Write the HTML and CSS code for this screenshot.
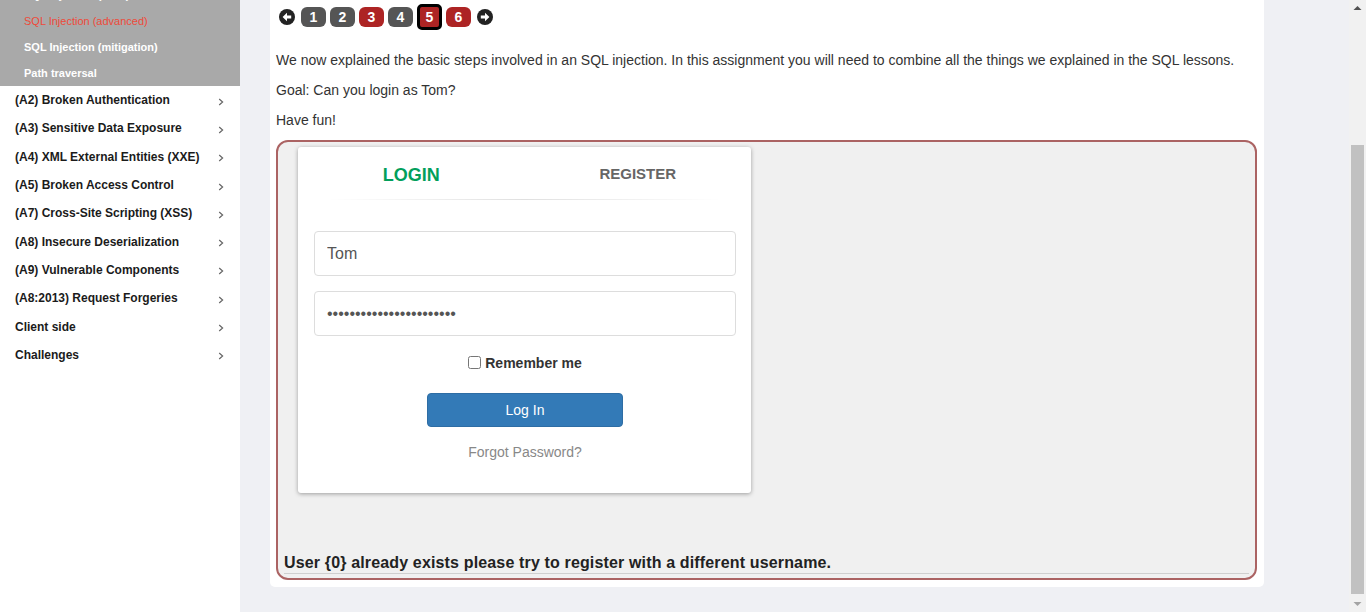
FILE: index.html
```html
<!DOCTYPE html>
<html lang="en">
<head>
<meta charset="utf-8">
<title>WebGoat - SQL Injection (advanced)</title>
<link rel="stylesheet" href="styles.css">
</head>
<body>
<div class="app">
  <aside class="sidebar">
    <ul class="submenu">
      <li class="sub-item">SQL Injection (intro)</li>
      <li class="sub-item active">SQL Injection (advanced)</li>
      <li class="sub-item">SQL Injection (mitigation)</li>
      <li class="sub-item">Path traversal</li>
    </ul>
    <ul class="menu">
      <li class="menu-item"><span>(A2) Broken Authentication</span><svg class="chev" viewBox="0 0 6 8" width="6" height="8"><path d="M1.2 1 L4.6 4 L1.2 7" fill="none" stroke="#666" stroke-width="1.2"/></svg></li>
      <li class="menu-item"><span>(A3) Sensitive Data Exposure</span><svg class="chev" viewBox="0 0 6 8" width="6" height="8"><path d="M1.2 1 L4.6 4 L1.2 7" fill="none" stroke="#666" stroke-width="1.2"/></svg></li>
      <li class="menu-item"><span>(A4) XML External Entities (XXE)</span><svg class="chev" viewBox="0 0 6 8" width="6" height="8"><path d="M1.2 1 L4.6 4 L1.2 7" fill="none" stroke="#666" stroke-width="1.2"/></svg></li>
      <li class="menu-item"><span>(A5) Broken Access Control</span><svg class="chev" viewBox="0 0 6 8" width="6" height="8"><path d="M1.2 1 L4.6 4 L1.2 7" fill="none" stroke="#666" stroke-width="1.2"/></svg></li>
      <li class="menu-item"><span>(A7) Cross-Site Scripting (XSS)</span><svg class="chev" viewBox="0 0 6 8" width="6" height="8"><path d="M1.2 1 L4.6 4 L1.2 7" fill="none" stroke="#666" stroke-width="1.2"/></svg></li>
      <li class="menu-item"><span>(A8) Insecure Deserialization</span><svg class="chev" viewBox="0 0 6 8" width="6" height="8"><path d="M1.2 1 L4.6 4 L1.2 7" fill="none" stroke="#666" stroke-width="1.2"/></svg></li>
      <li class="menu-item"><span>(A9) Vulnerable Components</span><svg class="chev" viewBox="0 0 6 8" width="6" height="8"><path d="M1.2 1 L4.6 4 L1.2 7" fill="none" stroke="#666" stroke-width="1.2"/></svg></li>
      <li class="menu-item"><span>(A8:2013) Request Forgeries</span><svg class="chev" viewBox="0 0 6 8" width="6" height="8"><path d="M1.2 1 L4.6 4 L1.2 7" fill="none" stroke="#666" stroke-width="1.2"/></svg></li>
      <li class="menu-item"><span>Client side</span><svg class="chev" viewBox="0 0 6 8" width="6" height="8"><path d="M1.2 1 L4.6 4 L1.2 7" fill="none" stroke="#666" stroke-width="1.2"/></svg></li>
      <li class="menu-item"><span>Challenges</span><svg class="chev" viewBox="0 0 6 8" width="6" height="8"><path d="M1.2 1 L4.6 4 L1.2 7" fill="none" stroke="#666" stroke-width="1.2"/></svg></li>
    </ul>
  </aside>

  <main class="main">
    <section class="panel">
      <nav class="pager">
        <svg class="pager-arrow prev" viewBox="0 0 16 16" width="16" height="16"><circle cx="8" cy="8" r="8" fill="#222"/><path d="M3.6 8 L8 3.8 L8 6.4 L12.2 6.4 L12.2 9.6 L8 9.6 L8 12.2 Z" fill="#fff"/></svg>
        <span class="page done">1</span>
        <span class="page done">2</span>
        <span class="page todo">3</span>
        <span class="page done">4</span>
        <span class="page todo current">5</span>
        <span class="page todo">6</span>
        <svg class="pager-arrow next" viewBox="0 0 16 16" width="16" height="16"><circle cx="8" cy="8" r="8" fill="#222"/><path d="M12.4 8 L8 3.8 L8 6.4 L3.8 6.4 L3.8 9.6 L8 9.6 L8 12.2 Z" fill="#fff"/></svg>
      </nav>

      <p class="intro first">We now explained the basic steps involved in an SQL injection. In this assignment you will need to combine all the things we explained in the SQL lessons.</p>
      <p class="intro">Goal: Can you login as Tom?</p>
      <p class="intro">Have fun!</p>

      <div class="attack">
        <div class="card">
          <div class="tabs">
            <span class="tab tab-active">LOGIN</span>
            <span class="tab">REGISTER</span>
          </div>
          <div class="tab-rule"></div>
          <form class="login-form">
            <input class="field" type="text" value="Tom">
            <input class="field pass" type="password" value="thisisasecretfortomonly">
            <label class="remember"><input type="checkbox" class="check"> Remember me</label>
            <button type="button" class="btn-login">Log In</button>
            <span class="forgot">Forgot Password?</span>
          </form>
        </div>
        <div class="feedback">User {0} already exists please try to register with a different username.</div>
      </div>
    </section>
  </main>

  <div class="scrollbar">
    <svg class="sb-arrow" viewBox="0 0 17 17" width="17" height="17"><path d="M4.5 10 L8.5 6 L12.5 10 Z" fill="#505050"/></svg>
    <div class="sb-track"><div class="sb-thumb"></div></div>
    <svg class="sb-arrow" viewBox="0 0 17 17" width="17" height="17"><path d="M4.5 7 L8.5 11 L12.5 7 Z" fill="#a3a3a3"/></svg>
  </div>
</div>
</body>
</html>
```

FILE: styles.css
```css
* { box-sizing: border-box; }

html, body {
  margin: 0;
  padding: 0;
  height: 612px;
  overflow: hidden;
}

body {
  font-family: "Liberation Sans", Arial, sans-serif;
  font-size: 14px;
  color: #333;
  background: #eff0f4;
}

.app {
  display: flex;
  height: 612px;
}

/* ---------- sidebar ---------- */
.sidebar {
  width: 240px;
  flex: 0 0 240px;
  background: #fff;
  overflow: hidden;
}

.submenu {
  list-style: none;
  margin: -18px 0 0 0;
  padding: 0;
  background: #a9a9a9;
}

.sub-item {
  height: 26px;
  line-height: 26px;
  padding-left: 24px;
  font-size: 11px;
  font-weight: bold;
  color: #fff;
}

.sub-item.active {
  color: #ee4a3a;
  font-weight: normal;
}

.menu {
  list-style: none;
  margin: 0;
  padding: 0;
}

.menu-item {
  display: flex;
  align-items: center;
  justify-content: space-between;
  height: 28.3px;
  padding: 0 15px;
  font-size: 12px;
  font-weight: bold;
  color: #1b1b1b;
}

.chev {
  margin-right: 1px;
  margin-top: 3px;
}

/* ---------- main ---------- */
.main {
  flex: 1 1 auto;
  padding: 0 85px 0 30px;
}

.panel {
  background: #fff;
  border-radius: 0 0 5px 5px;
  padding: 0 7px 7px 6px;
  display: flex;
  flex-direction: column;
}

.pager {
  display: flex;
  align-items: center;
  height: 33px;
  padding-left: 3px;
  gap: 4px;
}

.pager-arrow.prev { margin-right: 2px; }
.pager-arrow.next { margin-left: 2px; }

.page {
  display: flex;
  align-items: center;
  justify-content: center;
  width: 25px;
  height: 20px;
  border-radius: 6px;
  color: #fff;
  font-weight: bold;
  font-size: 14px;
}

.page.done { background: #555; }
.page.todo { background: #ad2424; }

.page.current {
  height: 26px;
  border: 3px solid #000;
  border-radius: 5px;
}

.intro {
  margin: 0 0 10px 0;
  line-height: 20px;
  font-size: 14px;
  color: #333;
}

.intro.first { margin-top: 17px; }

/* ---------- attack container ---------- */
.attack {
  height: 440px;
  border: 2px solid #ab6363;
  border-radius: 12px;
  background: #f0f0f0;
  padding: 5px 2px 4px 2px;
  display: flex;
  flex-direction: column;
}

.card {
  width: 453px;
  height: 346px;
  margin-left: 18px;
  background: #fff;
  border-radius: 3px;
  box-shadow: 0 1px 4px rgba(0, 0, 0, 0.35);
  display: flex;
  flex-direction: column;
}

.tabs {
  display: flex;
  height: 52px;
  align-items: center;
}

.tab {
  flex: 1 1 50%;
  text-align: center;
  font-weight: bold;
  font-size: 15px;
  color: #666;
  margin-top: 1px;
}

.tab.tab-active {
  font-size: 18px;
  color: #029f5b;
  margin-top: 5px;
}

.tab-rule {
  height: 1px;
  margin: 0 30px;
  background: linear-gradient(to right, rgba(0,0,0,0), rgba(0,0,0,0.12), rgba(0,0,0,0));
}

.login-form {
  display: flex;
  flex-direction: column;
  align-items: center;
  padding: 31px 15px 0 16px;
}

.field {
  width: 100%;
  height: 45px;
  border: 1px solid #ddd;
  border-radius: 4px;
  padding: 0 12px;
  font-family: "Liberation Sans", Arial, sans-serif;
  font-size: 16px;
  color: #555;
  margin: 0 0 15px 0;
  outline: none;
}

.field.pass { font-size: 16px; }

.remember {
  display: flex;
  align-items: center;
  font-weight: bold;
  font-size: 14px;
  color: #333;
  gap: 4px;
  height: 22px;
  margin-top: 1px;
}

.check {
  margin: 0;
  width: 13px;
  height: 13px;
  position: relative;
  top: -1px;
}

.btn-login {
  width: 196px;
  height: 34px;
  margin-top: 19px;
  background: #337ab7;
  border: 1px solid #2e6da4;
  border-radius: 4px;
  color: #fff;
  font-family: "Liberation Sans", Arial, sans-serif;
  font-size: 14px;
}

.forgot {
  margin-top: 15px;
  color: #888;
  font-size: 14px;
  line-height: 20px;
}

.feedback {
  margin: auto 4px 0 4px;
  padding: 0;
  border-bottom: 1px solid #cfcfcf;
  font-weight: bold;
  font-size: 16px;
  letter-spacing: 0.15px;
  line-height: 20px;
  color: #222;
}

/* ---------- scrollbar ---------- */
.scrollbar {
  width: 17px;
  flex: 0 0 17px;
  background: #f1f1f1;
  display: flex;
  flex-direction: column;
}

.sb-arrow { flex: 0 0 17px; display: block; }

.sb-track {
  flex: 1 1 auto;
  padding: 128px 2px 1px 2px;
  display: flex;
}

.sb-thumb {
  flex: 1 1 auto;
  background: #c1c1c1;
}
```
